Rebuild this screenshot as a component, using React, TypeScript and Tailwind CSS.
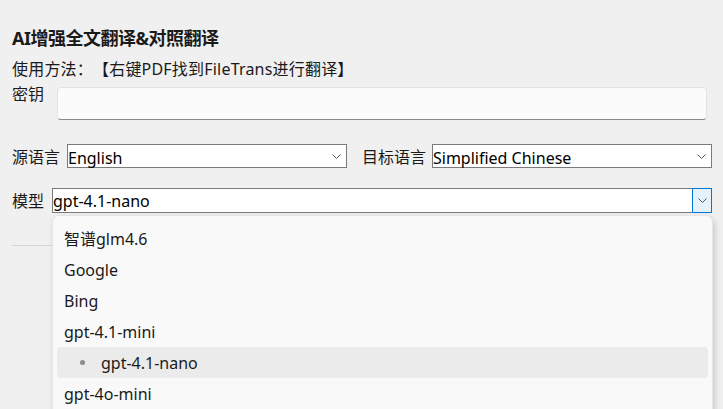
import React from "react";

const FONT = { fontFamily: '"Noto Sans", "Noto Sans CJK SC", sans-serif' };

function Chevron({ className = "" }: { className?: string }) {
  return (
    <svg width="9" height="5" viewBox="0 0 9 5" className={className} fill="none">
      <path d="M0.5 0.5 L4.5 4.5 L8.5 0.5" stroke="#555" strokeWidth="1" />
    </svg>
  );
}

function Select({ value, className = "" }: { value: string; className?: string }) {
  return (
    <div
      className={`h-[24px] border border-[#7a7a7a] bg-white flex items-start justify-between pl-0 pr-[5px] ${className}`}
    >
      <span className="pt-[3px] text-[16px] leading-[20px] text-black">{value}</span>
      <Chevron className="mt-[9px]" />
    </div>
  );
}

const items = ["智谱glm4.6", "Google", "Bing", "gpt-4.1-mini", "gpt-4.1-nano", "gpt-4o-mini"];

export default function App() {
  return (
    <div
      className="relative w-[723px] h-[409px] overflow-hidden bg-[#f0f0f0] text-[#1a1a1a] pl-3 pr-[11px] pt-[27px] [text-spacing-trim:space-all]"
      style={FONT}
    >
      <div className="text-[18px] leading-[22px] font-bold tracking-[-0.5px] text-[#1a1a1a]">AI增强全文翻译&amp;对照翻译</div>
      <div className="mt-[10px] text-[16px] leading-[20px] tracking-[0.2px]">使用方法：【右键PDF找到FileTrans进行翻译】</div>
      <div className="mt-[5px] flex items-start">
        <span className="w-[45px] text-[16px] leading-[20px] pt-[0px]">密钥</span>
        <div className="flex-1 mr-[5px] mt-[3px] h-[33px] rounded-[4px] bg-[#fbfbfb] border border-[#e3e3e3] border-b-[#8a8a8a]" />
      </div>
      <div className="mt-[24px] flex items-center">
        <span className="w-[55px] text-[16px] leading-[20px] pt-[1px]">源语言</span>
        <Select value="English" className="w-[280px]" />
        <span className="ml-[15px] w-[70px] text-[16px] leading-[20px] pt-[1px]">目标语言</span>
        <Select value="Simplified Chinese" className="w-[280px]" />
      </div>
      <div className="mt-[20px] flex items-center">
        <span className="w-[40px] text-[16px] leading-[20px]">模型</span>
        <div className="flex-1 h-[25px] flex">
          <div className="flex-1 border border-r-0 border-[#7a7a7a] bg-white flex items-center pl-0">
            <span className="text-[16px] leading-[20px] text-black">gpt-4.1-nano</span>
          </div>
          <div className="w-[20px] border border-[#0078d7] bg-[#e5f1fb] flex items-center justify-center">
            <Chevron />
          </div>
        </div>
      </div>
      <div className="mt-[32px] h-px bg-[#d5d5d5]" />

      <div className="absolute left-[52px] top-[215px] w-[661px] h-[260px] rounded-[7px] bg-[#f9f9f9] border border-[#e6e6e6] shadow-[2px_3px_6px_rgba(0,0,0,0.16)] pt-[7px]">
        {items.map((it) => {
          const sel = it === "gpt-4.1-nano";
          return (
            <div
              key={it}
              className={`mx-[4px] h-[31px] flex items-center rounded-[4px] ${sel ? "bg-[#ebebeb]" : ""}`}
            >
              {sel ? (
                <>
                  <span className="ml-[23px] w-[5px] h-[5px] rounded-full bg-[#8c8c8c]" />
                  <span className="ml-[16px] text-[16px] leading-[20px] text-[#1a1a1a]">{it}</span>
                </>
              ) : (
                <span className="ml-[7px] text-[16px] leading-[20px] text-[#1a1a1a]">{it}</span>
              )}
            </div>
          );
        })}
      </div>
    </div>
  );
}
